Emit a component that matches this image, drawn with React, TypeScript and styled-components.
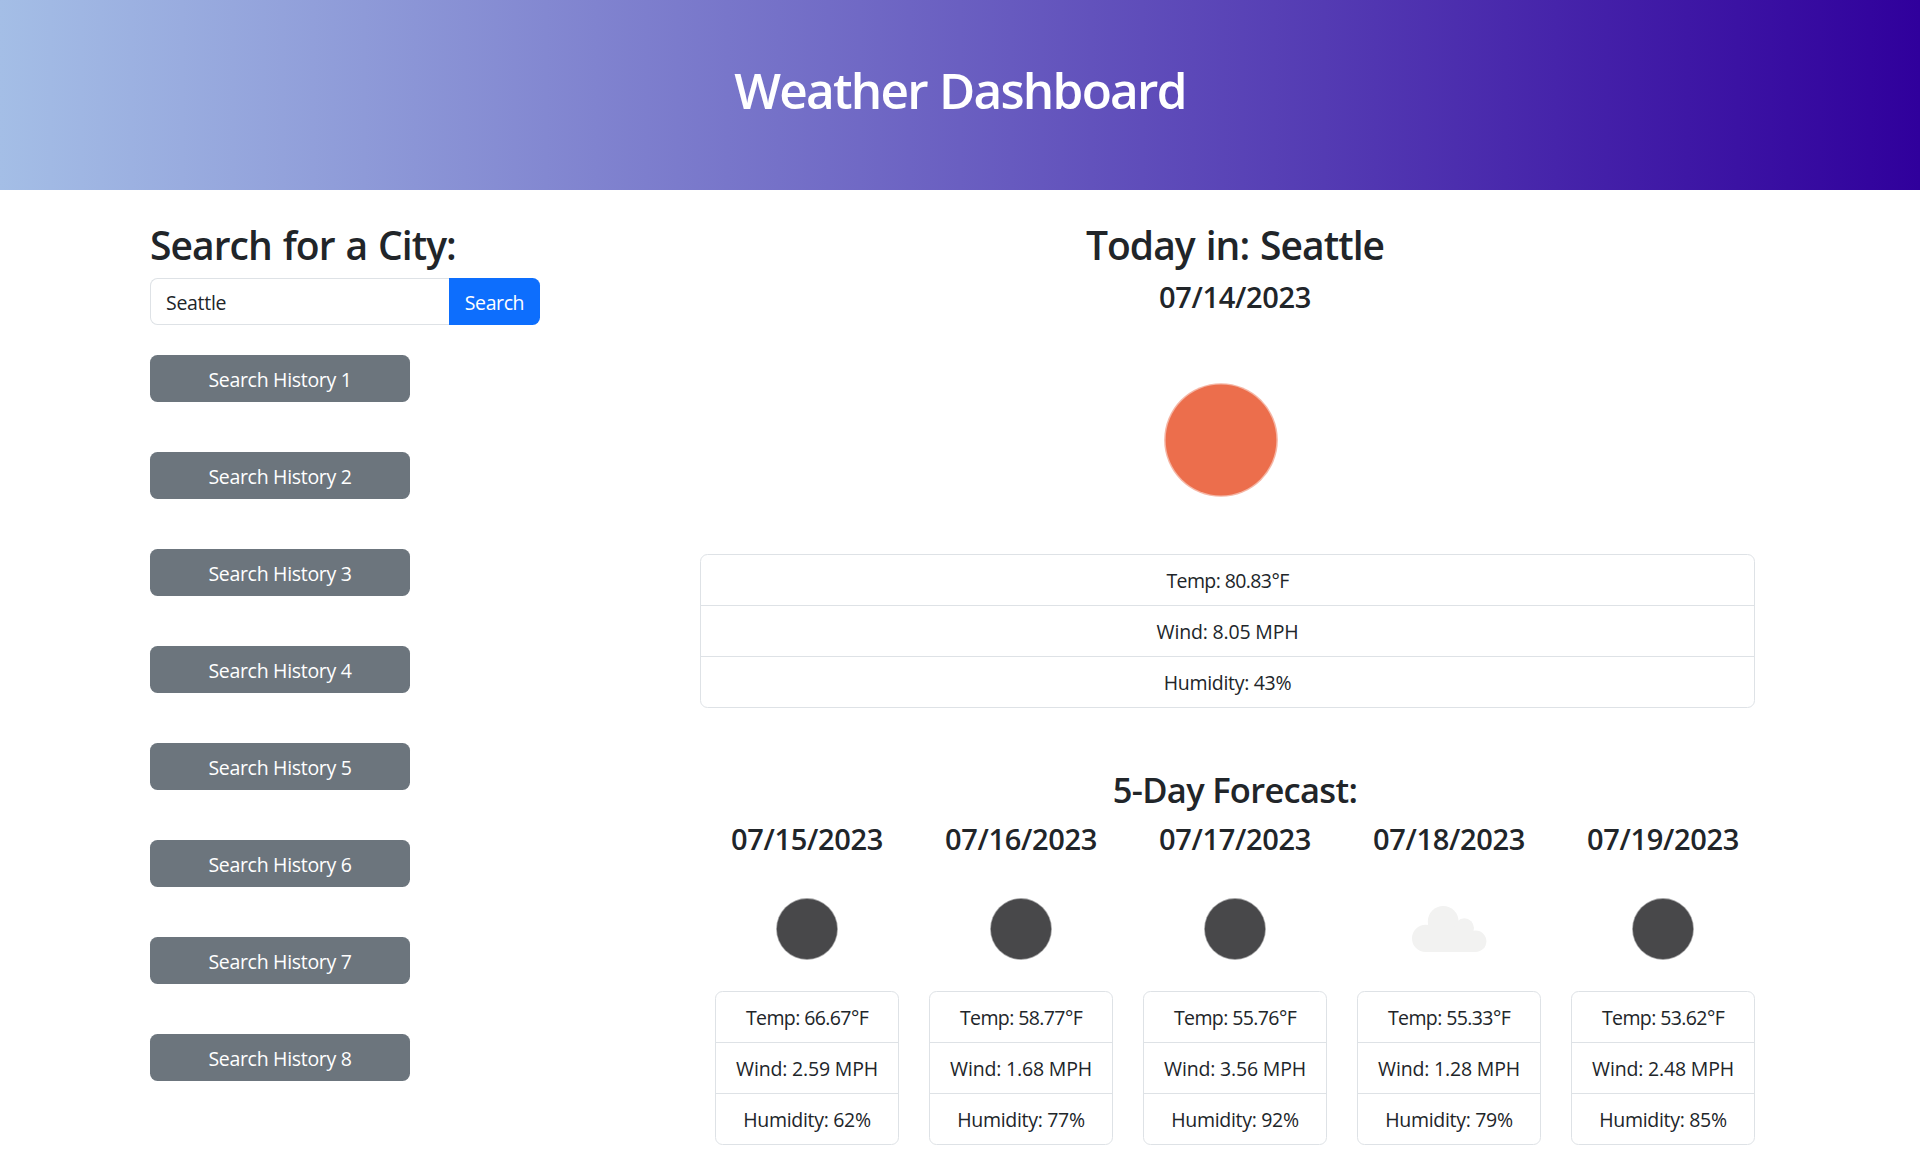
import React from "react";
import styled, { createGlobalStyle } from "styled-components";

const GlobalStyle = createGlobalStyle`
  *, *::before, *::after { box-sizing: border-box; }
  body {
    margin: 0;
    background: #fff;
    color: #212529;
    font-family: "Open Sans", "Noto Sans", sans-serif;
    font-size: 19.5px;
    line-height: 30px;
  }
  h1, h2, h3, h4, ul { margin: 0; padding: 0; }
  h1, h2, h3, h4 { font-weight: 600; white-space: nowrap; }
`;

const Header = styled.header`
  height: 190px;
  padding-top: 60px;
  text-align: center;
  color: #fff;
  background: linear-gradient(to right, #a4bee6, #30009c);
`;

const Title = styled.h1`
  font-size: 49.5px;
  line-height: 61px;
  letter-spacing: -1.75px;
  word-spacing: 1px;
`;

const Main = styled.main`
  display: flex;
  padding: 31px 165px 0 150px;
`;

const Sidebar = styled.aside`
  width: 390px;
  flex: none;
`;

const Heading = styled.h2`
  font-size: 39px;
  line-height: 48px;
  letter-spacing: -0.95px;
  word-spacing: 1.7px;
`;

const SearchForm = styled.form`
  display: flex;
  height: 47px;
  margin: 9px 0 30px;
`;

const Input = styled.input`
  width: 299px;
  padding: 2px 15px 0;
  border: 1px solid #dee2e6;
  border-right: 0;
  border-radius: 7.5px 0 0 7.5px;
  outline: 0;
  color: #212529;
  font: inherit;
  letter-spacing: -0.3px;
`;

const SearchButton = styled.button`
  width: 91px;
  padding: 2px 0 0;
  border: 0;
  border-radius: 0 7.5px 7.5px 0;
  background: #0d6efd;
  color: #fff;
  font: inherit;
  letter-spacing: -0.4px;
`;

const History = styled.div`
  display: flex;
  flex-direction: column;
  gap: 50px;
`;

const HistoryButton = styled.button`
  width: 260px;
  height: 47px;
  padding: 2px 0 0;
  border: 0;
  border-radius: 7.5px;
  background: #6c757d;
  color: #fff;
  font: inherit;
  letter-spacing: -0.3px;
`;

const Content = styled.section`
  flex: 1;
  margin-left: 160px;
  text-align: center;
`;

const Centered = styled.div`
  padding-left: 15px;
`;

const DateLabel = styled.h4`
  padding-top: 10px;
  font-size: 29px;
  line-height: 36px;
  letter-spacing: -0.35px;
`;

const SubHeading = styled.h3`
  padding-top: 61px;
  font-size: 34.5px;
  line-height: 42px;
  letter-spacing: -0.7px;
`;

const Icon = styled.svg<{ $size: number }>`
  display: block;
  width: ${(p) => p.$size}px;
  height: ${(p) => p.$size}px;
  margin: 0 auto;
`;

const TodayIcon = styled.div`
  padding: 33px 13px 22px 0;
`;

const Readings = styled.ul`
  list-style: none;
  border: 1px solid #dee2e6;
  border-radius: 7.5px;
`;

const Reading = styled.li<{ $tracking: number }>`
  height: 50px;
  padding-top: 11px;
  white-space: nowrap;
  letter-spacing: ${(p) => p.$tracking}px;
  & + & {
    height: 51px;
    border-top: 1px solid #dee2e6;
  }
`;

const Forecast = styled.div`
  display: grid;
  grid-template-columns: repeat(5, 184px);
  gap: 30px;
  padding-left: 15px;
`;

const Day = styled.article`
  display: flex;
  flex-direction: column;
`;

const DayIcon = styled.div`
  padding: 22px 0 12px;
`;

type Sky = "clear-day" | "clear-night" | "cloudy";

function SkyIcon({ sky, size }: { sky: Sky; size: number }) {
  const tint = sky === "clear-day" ? "#ec6e4c" : "#48484a";
  return (
    <Icon $size={size} viewBox="0 0 100 100">
      {sky === "cloudy" ? (
        <g fill="#f2f2f1">
          <circle cx="26.6" cy="59.4" r="13.6" />
          <circle cx="44.2" cy="42.4" r="15.4" />
          <circle cx="65.3" cy="49" r="9.7" />
          <circle cx="76.7" cy="62.3" r="10.7" />
          <path d="M26.6 50H65L76.7 62V73H26.6Z" />
        </g>
      ) : (
        <>
          <circle cx="50" cy="50" r="30.9" fill={tint} opacity="0.5" />
          <circle cx="50" cy="50" r="30.1" fill={tint} />
        </>
      )}
    </Icon>
  );
}

function Weather({ temp, wind, humidity }: { temp: string; wind: string; humidity: number }) {
  return (
    <Readings>
      <Reading $tracking={-0.6}>Temp: {temp}°F</Reading>
      <Reading $tracking={-0.18}>Wind: {wind} MPH</Reading>
      <Reading $tracking={-0.3}>Humidity: {humidity}%</Reading>
    </Readings>
  );
}

const days: { date: string; sky: Sky; temp: string; wind: string; humidity: number }[] = [
  { date: "07/15/2023", sky: "clear-night", temp: "66.67", wind: "2.59", humidity: 62 },
  { date: "07/16/2023", sky: "clear-night", temp: "58.77", wind: "1.68", humidity: 77 },
  { date: "07/17/2023", sky: "clear-night", temp: "55.76", wind: "3.56", humidity: 92 },
  { date: "07/18/2023", sky: "cloudy", temp: "55.33", wind: "1.28", humidity: 79 },
  { date: "07/19/2023", sky: "clear-night", temp: "53.62", wind: "2.48", humidity: 85 },
];

export default function App() {
  return (
    <>
      <GlobalStyle />
      <Header>
        <Title>Weather Dashboard</Title>
      </Header>
      <Main>
        <Sidebar>
          <Heading>Search for a City:</Heading>
          <SearchForm onSubmit={(e) => e.preventDefault()}>
            <Input defaultValue="Seattle" />
            <SearchButton>Search</SearchButton>
          </SearchForm>
          <History>
            {[1, 2, 3, 4, 5, 6, 7, 8].map((n) => (
              <HistoryButton key={n}>Search History {n}</HistoryButton>
            ))}
          </History>
        </Sidebar>
        <Content>
          <Centered>
            <Heading>Today in: Seattle</Heading>
            <DateLabel>07/14/2023</DateLabel>
          </Centered>
          <TodayIcon>
            <SkyIcon sky="clear-day" size={184} />
          </TodayIcon>
          <Weather temp="80.83" wind="8.05" humidity={43} />
          <Centered>
            <SubHeading>5-Day Forecast:</SubHeading>
          </Centered>
          <Forecast>
            {days.map((d) => (
              <Day key={d.date}>
                <DateLabel>{d.date}</DateLabel>
                <DayIcon>
                  <SkyIcon sky={d.sky} size={100} />
                </DayIcon>
                <Weather temp={d.temp} wind={d.wind} humidity={d.humidity} />
              </Day>
            ))}
          </Forecast>
        </Content>
      </Main>
    </>
  );
}
